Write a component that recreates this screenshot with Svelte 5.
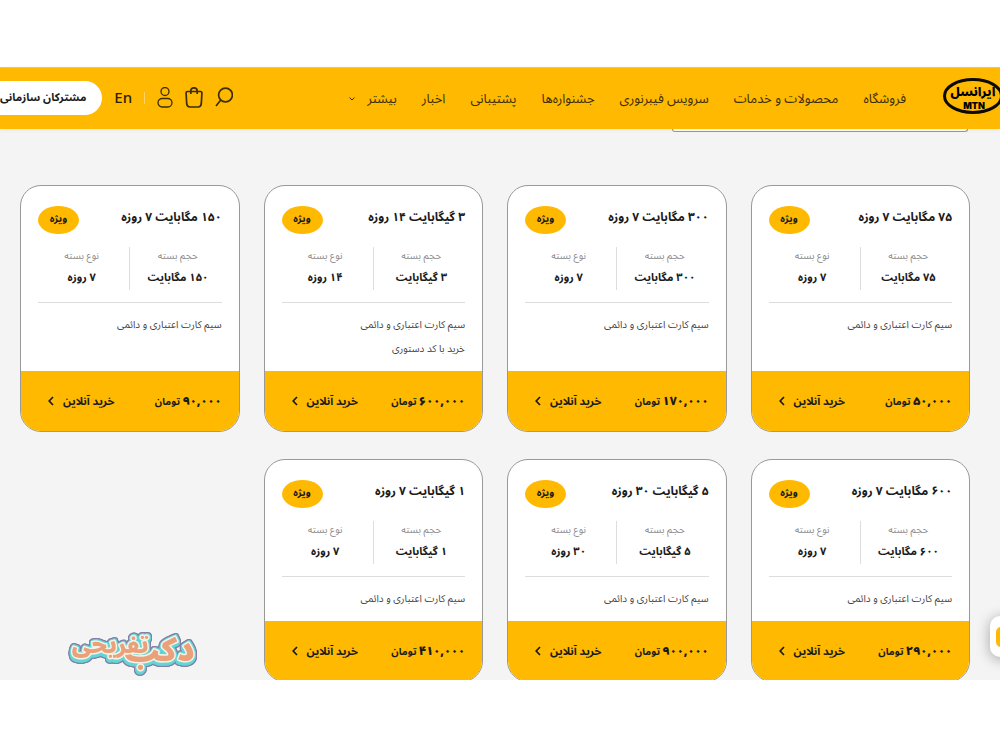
<script>
  const nav = ['فروشگاه', 'محصولات و خدمات', 'سرویس فیبرنوری', 'جشنواره‌ها', 'پشتیبانی', 'اخبار'];
  const base = 'سیم کارت اعتباری و دائمی';
  const packs = [
    { size: '۷۵ مگابایت', days: '۷ روزه', price: '۵۰,۰۰۰', notes: [base] },
    { size: '۳۰۰ مگابایت', days: '۷ روزه', price: '۱۷۰,۰۰۰', notes: [base] },
    { size: '۳ گیگابایت', days: '۱۴ روزه', price: '۶۰۰,۰۰۰', notes: [base, 'خرید با کد دستوری'] },
    { size: '۱۵۰ مگابایت', days: '۷ روزه', price: '۹۰,۰۰۰', notes: [base] },
    { size: '۶۰۰ مگابایت', days: '۷ روزه', price: '۲۹۰,۰۰۰', notes: [base] },
    { size: '۵ گیگابایت', days: '۳۰ روزه', price: '۹۰۰,۰۰۰', notes: [base] },
    { size: '۱ گیگابایت', days: '۷ روزه', price: '۴۱۰,۰۰۰', notes: [base] }
  ];
</script>

<div class="page" dir="rtl">
  <header>
    <a class="logo" href="#home" aria-label="ایرانسل MTN">
      <svg width="60" height="38" viewBox="0 0 60 38">
        <ellipse cx="30" cy="19" rx="28.5" ry="16.5" fill="none" stroke="#0b0900" stroke-width="3" />
        <text x="30" y="19" text-anchor="middle" font-size="12" font-weight="900">ایرانسل</text>
        <text x="31" y="32" text-anchor="middle" class="mtn" font-size="9" font-weight="900" direction="ltr">MTN</text>
      </svg>
    </a>
    <nav>
      {#each nav as item}
        <a href="#menu">{item}</a>
      {/each}
      <button class="more">بیشتر
        <svg width="6" height="4" viewBox="0 0 6 4"><path d="M.5.5 3 3 5.5.5" fill="none" stroke="currentColor" /></svg>
      </button>
    </nav>
    <div class="tools">
      <button aria-label="جستجو">
        <svg width="18" height="22" viewBox="0 0 18 22"><circle cx="10.500" cy="8" r="6.900" /><path d="M5.800 13 1 19" /></svg>
      </button>
      <button aria-label="سبد خرید">
        <svg width="18" height="22" viewBox="0 0 18 22"><path d="M2.500 4.500h13q1.500 0 1.400 1.700l-.6 10.500q-.3 3.300-3.300 3.300H5q-3 0-3.300-3.300L1.100 6.200Q1 4.500 2.500 4.500zM5.800 7V4a3.200 3.200 0 0 1 6.400 0v3" /></svg>
      </button>
      <button aria-label="حساب کاربری">
        <svg class="thin" width="16" height="22" viewBox="0 0 16 22"><circle cx="8" cy="4.500" r="4" /><rect x="1" y="11.500" width="14" height="8.500" rx="4.200" /></svg>
      </button>
      <i></i>
      <a class="lang" href="#en">En</a>
    </div>
    <a class="business" href="#business">مشترکان سازمانی</a>
  </header>

  <main>
    <div class="filter"></div>
    <section class="grid">
      {#each packs as p}
        <article>
          <div class="top">
            <h2>{p.size} {p.days}</h2>
            <span class="badge">ویژه</span>
          </div>
          <dl>
            <div><dt>حجم بسته</dt><dd>{p.size}</dd></div>
            <i></i>
            <div><dt>نوع بسته</dt><dd>{p.days}</dd></div>
          </dl>
          <div class="notes">
            {#each p.notes as n}<p>{n}</p>{/each}
          </div>
          <footer>
            <span class="price"><b>{p.price}</b> تومان</span>
            <a href="#buy">خرید آنلاین
              <svg width="6" height="10" viewBox="0 0 6 10"><path d="M5 1 1.200 5 5 9" fill="none" stroke="currentColor" stroke-width="1.700" /></svg>
            </a>
          </footer>
        </article>
      {/each}
    </section>
    <button class="chat" aria-label="گفتگو"><span></span></button>
    <svg class="mark" width="142" height="68" viewBox="0 0 142 68" role="img" aria-label="دکب تفریحی">
      <text x="133" y="49" font-size="32">دکب</text>
      <text x="87" y="41" font-size="23">تفریحی</text>
    </svg>
  </main>
</div>

<style>
  :global(body) { margin: 0; background: #fff; }
  .page {
    padding: 67px 0 70px;
    font-family: 'Noto Sans Arabic', 'Noto Sans', 'DejaVu Sans', sans-serif;
    color: #1b1b1b;
    overflow: hidden;
  }
  a { color: inherit; text-decoration: none; }
  button { font: inherit; color: inherit; background: none; border: 0; padding: 0; }
  svg { display: block; flex: none; }
  header {
    position: relative;
    z-index: 1;
    display: flex;
    align-items: center;
    box-sizing: border-box;
    height: 62px;
    padding-bottom: 2px;
    border-top: 1px solid #e0c878;
    background: #ffb900;
    box-shadow: 0 1px 4px #0001;
    white-space: nowrap;
  }
  .logo { margin: 0 -3px 4px 37px; }
  .mtn { font-family: Inter, sans-serif; }
  nav { display: flex; gap: 25px; padding-top: 2px; font-size: 13px; color: #3d2d05; }
  .more { display: flex; align-items: center; gap: 12px; }
  .tools { display: flex; align-items: center; gap: 12px; margin-right: auto; }
  .tools svg { fill: none; stroke: #3d2d05; stroke-width: 1.700; }
  .tools .thin { stroke-width: 1.300; }
  .tools i { width: 1px; height: 12px; background: #ffd564; }
  .lang { font-size: 15px; font-weight: 500; color: #2c2004; }
  .business {
    margin: 0 12px 0 -20px;
    padding: 0 16px 0 20px;
    border-radius: 17px;
    background: #fff;
    font-size: 11px;
    font-weight: 700;
    line-height: 34px;
  }
  main {
    position: relative;
    height: 551px;
    background: #f4f4f4;
    overflow: hidden;
  }
  .filter {
    width: 294px;
    height: 2px;
    margin-right: 32px;
    border: 1px solid #999;
    border-top: 0;
    border-radius: 0 0 8px 8px;
    background: #fff;
  }
  .grid {
    display: grid;
    grid-template-columns: repeat(4, minmax(0, 1fr));
    gap: 27px 24px;
    padding: 53px 30px 0 20px;
  }
  article {
    display: flex;
    flex-direction: column;
    border: 1px solid #999;
    border-radius: 21px;
    background: #fff;
    overflow: hidden;
    white-space: nowrap;
  }
  .top { display: flex; justify-content: space-between; padding: 20px 17px 0; }
  h2 { margin: 0; font-size: 12px; line-height: 23px; font-weight: 700; }
  .badge {
    width: 41px;
    border-radius: 50%;
    background: #ffb900;
    font-size: 10px;
    font-weight: 700;
    line-height: 26px;
    height: 28px;
    text-align: center;
  }
  dl {
    display: grid;
    grid-template-columns: 1fr 1px 1fr;
    gap: 4px;
    margin: 13px 17px 0;
    padding-bottom: 12px;
    border-bottom: 1px solid #ddd;
    text-align: center;
  }
  dl i { background: #ddd; }
  dt { font-size: 10px; line-height: 18px; color: #8d8d8d; }
  dd { margin: 0; font-size: 11px; line-height: 25px; font-weight: 700; }
  .notes { flex: 1; padding: 10px 17px; font-size: 10px; color: #444; }
  .notes p { margin: 0; line-height: 24px; }
  footer {
    display: flex;
    align-items: center;
    justify-content: space-between;
    height: 60px;
    padding: 0 17px 0 27px;
    background: #ffb900;
    font-size: 10px;
    font-weight: 700;
  }
  .price b { font-size: 12px; font-weight: 900; }
  footer a { display: flex; align-items: center; gap: 9px; font-size: 11px; }
  .chat {
    position: absolute;
    top: 487px;
    left: calc(100% - 10px);
    width: 44px;
    height: 41px;
    padding: 0 6px;
    border-radius: 10px;
    background: #fff;
    box-shadow: 0 2px 14px #0005;
  }
  .chat span { display: block; height: 20px; border-radius: 5px; background: #ffb900; }
  .mark {
    position: absolute;
    left: 62px;
    bottom: 0;
    font-weight: 900;
    fill: #e9a07b;
    stroke: #f6f3e6;
    stroke-width: 3;
    stroke-linejoin: round;
    paint-order: stroke;
    filter: drop-shadow(1px 0 0 #63d5d5) drop-shadow(-1px 1px 0 #63d5d5) drop-shadow(0 2px 0 #63d5d5)
      drop-shadow(0 -1px 0 #63d5d5) drop-shadow(1px 0 0 #8580a8) drop-shadow(-1px 0 0 #8580a8)
      drop-shadow(0 1px 0 #8580a8) drop-shadow(0 -1px 0 #8580a8);
  }
</style>
